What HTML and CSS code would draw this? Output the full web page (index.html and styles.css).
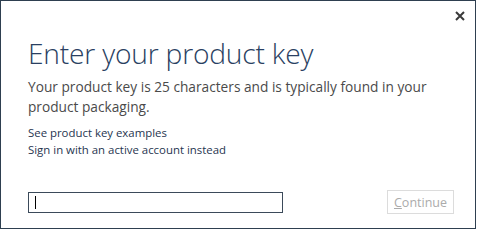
FILE: index.html
```html
<!DOCTYPE html>
<html>
<head>
<meta charset="utf-8">
<link rel="stylesheet" href="styles.css">
</head>
<body>
<div class="dialog">
  <div class="titlebar">
    <svg class="close" width="10" height="10" viewBox="0 0 10 10"><path d="M1 1L9 9M9 1L1 9" stroke="#3a3a3a" stroke-width="2"/></svg>
  </div>
  <div class="content">
    <h1 class="title">Enter your product key</h1>
    <p class="desc">Your product key is 25 characters and is typically found in your product packaging.</p>
    <div class="links">
      <a class="link">See product key examples</a>
      <a class="link">Sign in with an active account instead</a>
    </div>
    <div class="actions">
      <div class="keyinput"><span class="caret"></span></div>
      <div class="btn"><span class="u">C</span>ontinue</div>
    </div>
  </div>
</div>
</body>
</html>
```
FILE: styles.css
```css
html, body { margin: 0; padding: 0; background: #ffffff; }
.dialog {
  box-sizing: border-box;
  width: 476px;
  height: 229px;
  border: 1px solid #2e3f50;
  background: #fff;
  font-family: "Open Sans", "Noto Sans", sans-serif;
  display: flex;
  flex-direction: column;
}
.titlebar {
  height: 30px;
  display: flex;
  justify-content: flex-end;
  align-items: center;
  padding-right: 10px;
}
.close { display: block; margin-top: 0; }
.content {
  padding: 4px 0 0 27px;
  display: flex;
  flex-direction: column;
}
.title {
  margin: 0;
  font-weight: 300;
  font-size: 28.2px;
  line-height: 36px;
  color: #2a3f62;
  letter-spacing: -0.2px;
}
.desc {
  margin: 6px 0 0 0;
  font-size: 13.7px;
  line-height: 20px;
  color: #4a4a4a;
  width: 425px;
}
.links {
  margin-top: 7px;
  display: flex;
  flex-direction: column;
}
.link {
  font-size: 11.4px;
  line-height: 17px;
  color: #1f3550;
}
.actions {
  margin-top: 32px;
  display: flex;
  align-items: center;
}
.keyinput {
  box-sizing: border-box;
  width: 255px;
  height: 21px;
  border: 1px solid #3b4a5a;
  display: flex;
  align-items: center;
  padding-left: 6px;
}
.caret { width: 1px; height: 13px; background: #000; }
.btn {
  box-sizing: border-box;
  margin-left: 104px;
  width: 67px;
  height: 24px;
  border: 1px solid #dcdcdc;
  color: #ababab;
  font-size: 12.5px;
  display: flex;
  align-items: center;
  justify-content: center;
}
.u { text-decoration: underline; }
```
